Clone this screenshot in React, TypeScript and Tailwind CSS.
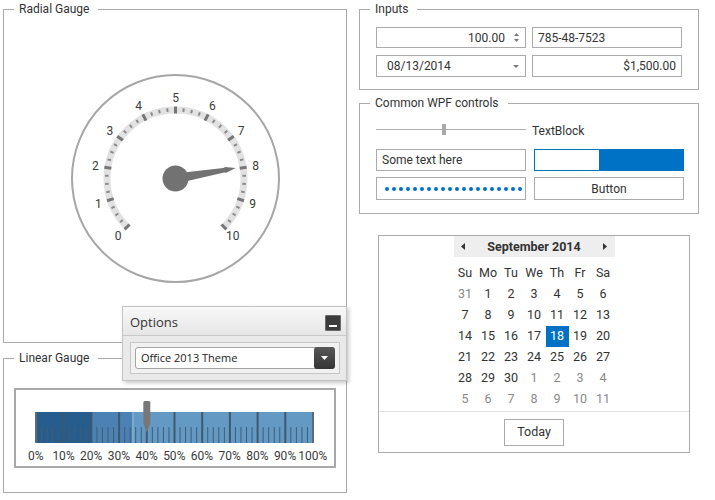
import React from "react";

const FONT = "font-['Roboto','Segoe_UI',sans-serif]";

function GroupBox({
  title,
  className,
  children,
}: {
  title: string;
  className?: string;
  children?: React.ReactNode;
}) {
  return (
    <fieldset className={`border border-[#ababab] min-w-0 ${className ?? ""}`}>
      <legend className="ml-[10px] pl-[5px] pr-[9px] text-[12px] leading-[16px] text-[#333]">
        {title}
      </legend>
      {children}
    </fieldset>
  );
}

function RadialGauge() {
  const W = 341;
  const H = 325;
  const cx = 171.5;
  const cy = 161.5;
  const pt = (deg: number, r: number) => {
    const a = (deg * Math.PI) / 180;
    return [cx + r * Math.sin(a), cy - r * Math.cos(a)];
  };
  const [sx, sy] = pt(-135, 68.5);
  const [ex, ey] = pt(135, 68.5);
  const majors = Array.from({ length: 11 }, (_, i) => -135 + 27 * i);
  const minors: number[] = [];
  for (let i = 0; i < 10; i++)
    for (let j = 1; j < 4; j++) minors.push(-135 + 27 * i + 6.75 * j);
  const needleAngle = -9.8;
  return (
    <svg width={W} height={H} className="block">
      <circle cx={cx} cy={cy} r={103.5} fill="white" stroke="#a6a6a6" strokeWidth={2} />
      <path
        d={`M ${sx} ${sy} A 68.5 68.5 0 1 1 ${ex} ${ey}`}
        fill="none"
        stroke="#e2e2e2"
        strokeWidth={7}
      />
      {minors.map((d, i) => {
        const [x1, y1] = pt(d, 67);
        const [x2, y2] = pt(d, 70.5);
        return <line key={"m" + i} x1={x1} y1={y1} x2={x2} y2={y2} stroke="#8a8a8a" strokeWidth={2} />;
      })}
      {majors.map((d, i) => {
        const [x1, y1] = pt(d, 65);
        const [x2, y2] = pt(d, 72);
        return <line key={"M" + i} x1={x1} y1={y1} x2={x2} y2={y2} stroke="#767676" strokeWidth={3} />;
      })}
      {majors.map((d, i) => {
        const [x, y] = pt(d, 81);
        return (
          <text
            key={"t" + i}
            x={x}
            y={y}
            textAnchor="middle"
            dominantBaseline="central"
            fontSize={12}
            fill="#3a3a3a"
            fontFamily="Roboto, sans-serif"
          >
            {i}
          </text>
        );
      })}
      <g transform={`translate(${cx} ${cy}) rotate(${needleAngle})`}>
        <polygon points="0,-5 49,-2.3 51,-2.9 61,0 51,2.9 49,2.3 0,5" fill="#727272" />
      </g>
      <circle cx={cx} cy={cy} r={13} fill="#727272" />
    </svg>
  );
}

function LinearGauge() {
  const x0 = 1;
  const w = 277;
  const top = 11;
  const h = 31;
  const X = (p: number) => x0 + (w * p) / 100;
  const majors = Array.from({ length: 11 }, (_, i) => i * 10);
  const minors: number[] = [];
  for (let i = 0; i < 10; i++) for (let j = 1; j < 5; j++) minors.push(i * 10 + j * 2);
  const px = X(40);
  return (
    <div className="flex flex-col">
      <svg width={281} height={43} className="block ml-[19px] mt-[11px]">
        <rect x={X(0)} y={top} width={X(20) - X(0)} height={h} fill="#265d8d" />
        <rect x={X(20)} y={top} width={X(35) - X(20)} height={h} fill="#4b82b3" />
        <rect x={X(35)} y={top} width={X(100) - X(35)} height={h} fill="#6499c4" />
        <line x1={X(35)} y1={top} x2={X(35)} y2={top + h} stroke="#9cc0de" strokeWidth={1} />
        {minors.map((p, i) => (
          <line key={i} x1={X(p)} y1={top + 15} x2={X(p)} y2={top + h} stroke="#3f5d78" strokeWidth={1} />
        ))}
        {majors.map((p, i) => (
          <line
            key={"M" + i}
            x1={X(p)}
            y1={top}
            x2={X(p)}
            y2={top + h}
            stroke={i === 0 || i === 10 ? "#5b6b7a" : "#3e5870"}
            strokeWidth={2}
          />
        ))}
        <path
          d={`M ${px - 3.5} 1.5 Q ${px - 3.5} 0 ${px - 2} 0 L ${px + 2} 0 Q ${px + 3.5} 0 ${px + 3.5} 1.5 L ${px + 3.5} 22 L ${px} 32 L ${px - 3.5} 22 Z`}
          fill="#777777"
        />
      </svg>
      <div className="flex ml-[6px] mt-[5px] text-[12px] leading-[14px] text-[#3a3a3a]">
        {majors.map((p) => (
          <div key={p} className="w-[27.7px] flex justify-center whitespace-nowrap">
            {p}%
          </div>
        ))}
      </div>
    </div>
  );
}

function TinyTri({ dir, color = "#777" }: { dir: "up" | "down" | "left" | "right"; color?: string }) {
  const pts =
    dir === "up"
      ? "0,4 3.5,0 7,4"
      : dir === "down"
      ? "0,0 7,0 3.5,4"
      : dir === "left"
      ? "4,0 4,7 0,3.5"
      : "0,0 0,7 4,3.5";
  const w = dir === "up" || dir === "down" ? 7 : 4;
  const hh = dir === "up" || dir === "down" ? 4 : 7;
  return (
    <svg width={w} height={hh} className="block">
      <polygon points={pts} fill={color} />
    </svg>
  );
}

function Inputs() {
  const box = "h-full border border-[#ababab] bg-white flex items-center text-[12px] text-[#333]";
  return (
    <div className="pl-[16px] pr-[15px] pt-[10px] pb-[12px] flex flex-col gap-[7px]">
      <div className="flex gap-[6px] h-[21px]">
        <div className={`${box} w-[150px] justify-end pr-[6px]`}>
          <span>100.00</span>
          <div className="ml-[9px] flex flex-col gap-[3px]">
            <svg width={5} height={3} className="block">
              <polygon points="0,3 2.5,0 5,3" fill="#777" />
            </svg>
            <svg width={5} height={3} className="block">
              <polygon points="0,0 5,0 2.5,3" fill="#777" />
            </svg>
          </div>
        </div>
        <div className={`${box} w-[150px] pl-[5px]`}>785-48-7523</div>
      </div>
      <div className="flex gap-[6px] h-[22px]">
        <div className={`${box} w-[150px] pl-[10px] pr-[6px] justify-between`}>
          <span>08/13/2014</span>
          <svg width={6} height={3} className="block">
            <polygon points="0,0 6,0 3,3" fill="#777" />
          </svg>
        </div>
        <div className={`${box} w-[150px] justify-end pr-[5px]`}>$1,500.00</div>
      </div>
    </div>
  );
}

function WpfControls() {
  return (
    <div className="pl-[16px] pr-[13px] pt-[7px] pb-[13px] flex flex-col">
      <div className="flex items-center h-[22px] gap-[6px]">
        <div className="relative w-[150px] h-[11px] flex items-center">
          <div className="w-full h-px bg-[#b0b0b0]" />
          <div className="absolute left-[66px] top-0 w-[4px] h-[11px] bg-[#a9a9a9]" />
        </div>
        <span className="text-[12px] text-[#333] mt-[3px]">TextBlock</span>
      </div>
      <div className="flex gap-[8px] mt-[9px] h-[22px]">
        <div className="w-[150px] border border-[#ababab] flex items-center pl-[5px] text-[12px] text-[#333]">
          Some text here
        </div>
        <div className="w-[150px] border border-[#0072c6] bg-white flex">
          <div className="ml-auto w-[84px] h-full bg-[#0072c6]" />
        </div>
      </div>
      <div className="flex gap-[8px] mt-[6px] h-[23px]">
        <div className="w-[150px] border border-[#ababab] flex items-center pl-[8px] gap-[3px]">
          {Array.from({ length: 20 }, (_, i) => (
            <span key={i} className="w-[4px] h-[4px] rounded-full bg-[#0072c6]" />
          ))}
        </div>
        <div className="w-[150px] border border-[#ababab] bg-white flex items-center justify-center text-[12px] text-[#333]">
          Button
        </div>
      </div>
    </div>
  );
}

function Calendar() {
  const days = ["Su", "Mo", "Tu", "We", "Th", "Fr", "Sa"];
  const rows: [number, boolean][][] = [
    [[31, true], [1, false], [2, false], [3, false], [4, false], [5, false], [6, false]],
    [[7, false], [8, false], [9, false], [10, false], [11, false], [12, false], [13, false]],
    [[14, false], [15, false], [16, false], [17, false], [18, false], [19, false], [20, false]],
    [[21, false], [22, false], [23, false], [24, false], [25, false], [26, false], [27, false]],
    [[28, false], [29, false], [30, false], [1, true], [2, true], [3, true], [4, true]],
    [[5, true], [6, true], [7, true], [8, true], [9, true], [10, true], [11, true]],
  ];
  return (
    <div className="ml-[19px] mt-[21px] w-[312px] h-[218px] border border-[#ababab] bg-white flex flex-col items-center text-[12.5px]">
      <div className="w-[161px] h-[21px] bg-[#eeeeee] flex items-center justify-between px-[7px]">
        <TinyTri dir="left" color="#333" />
        <span className="font-bold text-[#333] text-[12.5px] mt-[1px]">September 2014</span>
        <TinyTri dir="right" color="#333" />
      </div>
      <div className="mt-[6px] grid grid-cols-[repeat(7,23px)] auto-rows-[21px]">
        {days.map((d) => (
          <div key={d} className="flex items-center justify-center text-[#333]">
            {d}
          </div>
        ))}
        {rows.flat().map(([n, other], i) => {
          const sel = n === 18 && !other;
          return (
            <div
              key={i}
              className={`flex items-center justify-center ${
                sel ? "bg-[#0072c6] text-white" : other ? "text-[#8a8a8a]" : "text-[#333]"
              }`}
            >
              {n}
            </div>
          );
        })}
      </div>
      <div className="self-stretch h-px bg-[#e2e2e2] mt-[1px]" />
      <div className="mt-[7px] w-[60px] h-[27px] border border-[#ababab] flex items-center justify-center text-[#333]">
        Today
      </div>
    </div>
  );
}

function OptionsPanel() {
  return (
    <div className="absolute left-[122px] top-[306px] w-[225px] h-[75px] border border-[#c3c3c3] bg-[#e9e9e9] shadow-[2px_2px_4px_rgba(0,0,0,0.22)] flex flex-col font-['Open_Sans',sans-serif]">
      <div className="h-[29px] bg-[linear-gradient(to_bottom,#f8f8f8,#e6e6e6)] border-b border-[#c8c8c8] flex items-center justify-between pl-[7px] pr-[5px] pt-[3px]">
        <span className="text-[13px] text-[#333]">Options</span>
        <div className="w-[16px] h-[16px] bg-[#3b3b3b] border border-[#6a6a6a] rounded-[1px] flex items-end justify-center pb-[3px]">
          <div className="w-[8px] h-[2px] bg-white" />
        </div>
      </div>
      <div className="flex-1 pl-[7px] pr-[6px] pt-[6px] pb-[6px]">
        <div className="h-[32px] border border-[#c6c6c6] bg-[#f1f1f1] p-[4px]">
          <div className="h-full bg-white border border-[#a3a3a3] rounded-[3px] flex items-center justify-between">
            <span className="pl-[5px] text-[11px] text-[#222] mt-[1px]">Office 2013 Theme</span>
            <div className="w-[21px] h-[22px] -mr-px rounded-[3px] bg-[linear-gradient(to_bottom,#575757,#353535)] flex items-center justify-center">
              <svg width={7} height={4} className="block">
                <polygon points="0,0 7,0 3.5,4" fill="white" />
              </svg>
            </div>
          </div>
        </div>
      </div>
    </div>
  );
}

export default function App() {
  return (
    <div className={`relative w-[715px] h-[500px] bg-white overflow-hidden ${FONT} text-[#333]`}>
      <div className="flex pl-[3px] gap-[12px]">
        <div className="w-[344px] flex flex-col">
          <GroupBox title="Radial Gauge" className="mt-[1px] h-[342px]">
            <RadialGauge />
          </GroupBox>
          <GroupBox title="Linear Gauge" className="mt-[7px] h-[143px]">
            <div className="ml-[10px] mt-[22px] w-[322px] h-[80px] border-2 border-[#a8a8a8] bg-white">
              <LinearGauge />
            </div>
          </GroupBox>
        </div>
        <div className="w-[340px] flex flex-col">
          <GroupBox title="Inputs" className="mt-[1px]">
            <Inputs />
          </GroupBox>
          <GroupBox title="Common WPF controls" className="mt-[5px]">
            <WpfControls />
          </GroupBox>
          <Calendar />
        </div>
      </div>
      <OptionsPanel />
    </div>
  );
}
